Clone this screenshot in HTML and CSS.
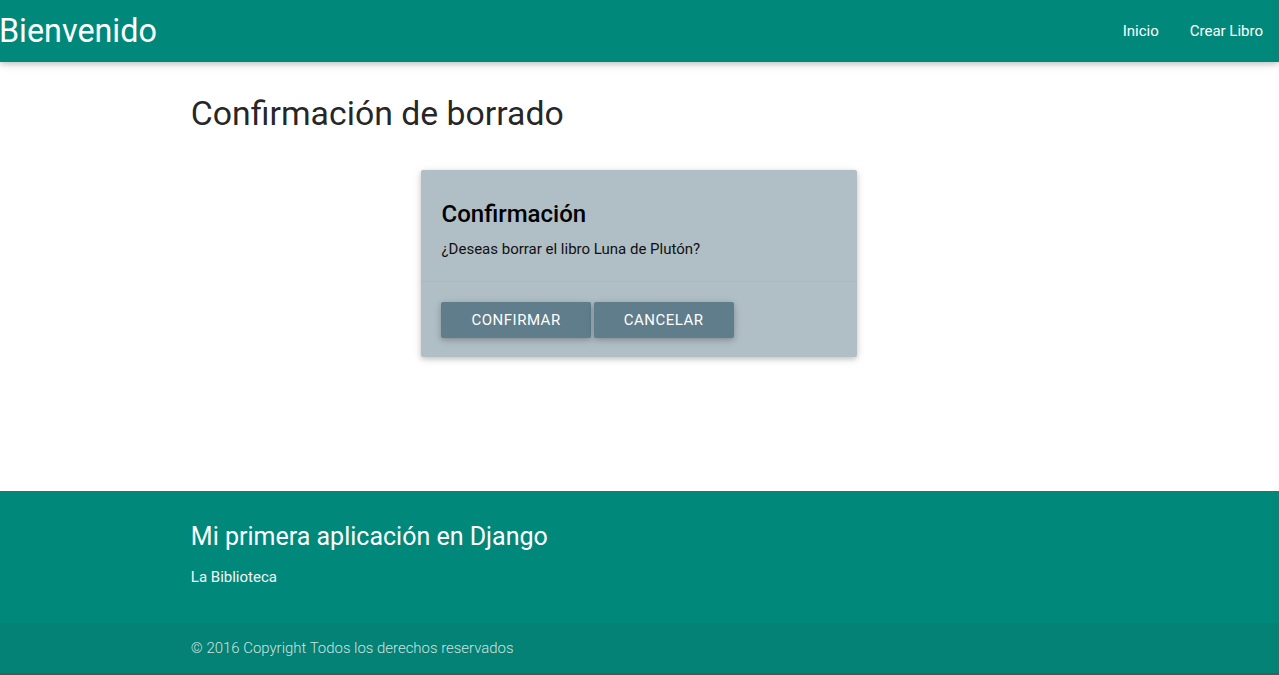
FILE: index.html
```html
<!DOCTYPE html>
<html lang="es">
<head>
<meta charset="utf-8">
<title>Bienvenido</title>
<link rel="stylesheet" href="styles.css">
</head>
<body>
<nav class="nav">
  <a class="brand" href="#">Bienvenido</a>
  <ul class="nav-links">
    <li><a href="#">Inicio</a></li>
    <li><a href="#">Crear Libro</a></li>
  </ul>
</nav>
<main class="main">
  <div class="container">
    <h3 class="page-title">Confirmación de borrado</h3>
    <div class="card">
      <div class="card-content">
        <span class="card-title">Confirmación</span>
        <p>¿Deseas borrar el libro Luna de Plutón?</p>
      </div>
      <div class="card-action">
        <button class="btn">Confirmar</button>
        <button class="btn btn-second">Cancelar</button>
      </div>
    </div>
  </div>
</main>
<footer class="footer">
  <div class="container">
    <h5 class="footer-title">Mi primera aplicación en Django</h5>
    <p class="footer-text">La Biblioteca</p>
  </div>
  <div class="footer-copyright">
    <div class="container">© 2016 Copyright Todos los derechos reservados</div>
  </div>
  <div class="bottom-strip"></div>
</footer>
</body>
</html>
```
FILE: styles.css
```css
* { box-sizing: border-box; }
html, body { margin: 0; padding: 0; }
body {
  font-family: Roboto, "Liberation Sans", sans-serif;
  font-size: 15px;
  line-height: 1.5;
  color: rgba(0,0,0,0.87);
  min-height: 100vh;
  display: flex;
  flex-direction: column;
  background: #fff;
}
a { text-decoration: none; color: inherit; }

.nav {
  height: 62px;
  background: #00897b;
  color: #fff;
  display: flex;
  align-items: center;
  justify-content: space-between;
  box-shadow: 0 2px 5px 0 rgba(0,0,0,0.16), 0 2px 10px 0 rgba(0,0,0,0.12);
  position: relative;
  z-index: 2;
}
.brand {
  font-size: 32.3px;
  line-height: 62px;
  margin-left: -1px;
}
.nav-links {
  list-style: none;
  margin: 0;
  padding: 0 1px 0 0;
  display: flex;
}
.nav-links a {
  display: block;
  padding: 0 15px;
  line-height: 60px;
  font-size: 15px;
}
.nav-links li:first-child a { padding-right: 16px; }

.main { flex: 1; }
.container {
  width: 70%;
  margin: 0 auto;
}
.page-title {
  font-size: 33.8px;
  font-weight: 400;
  line-height: 110%;
  margin: 33px 0 38px -1px;
}

.card {
  width: 436px;
  margin: 0 auto;
  background: #b0bec5;
  border-radius: 2px;
  box-shadow: 0 2px 5px 0 rgba(0,0,0,0.16), 0 2px 10px 0 rgba(0,0,0,0.12);
}
.card-content { padding: 20px; }
.card-title {
  display: block;
  font-size: 24px;
  font-weight: 500;
  line-height: 48px;
  color: #000;
}
.card-content p { margin: 0; color: #111; }
.card-action {
  border-top: 1px solid rgba(160,160,160,0.2);
  padding: 20px 20px 19px;
  display: flex;
  gap: 3px;
}
.btn {
  height: 36px;
  line-height: 36px;
  padding: 0 30px;
  border: none;
  border-radius: 2px;
  background: #607d8b;
  color: #fff;
  font-family: Roboto, "Liberation Sans", sans-serif;
  font-size: 15px;
  font-weight: 400;
  letter-spacing: .5px;
  text-transform: uppercase;
  box-shadow: 0 2px 5px 0 rgba(0,0,0,0.16), 0 2px 10px 0 rgba(0,0,0,0.12);
  cursor: pointer;
}
.btn-second { padding: 0 31px 0 30px; }

.footer {
  background: #00897b;
  color: #fff;
  padding-top: 20px;
}
.footer .container { position: relative; left: -1px; }
.footer-title {
  font-size: 25px;
  font-weight: 400;
  line-height: 110%;
  margin: 12px 0 15px;
}
.footer-text {
  margin: 0 0 35px;
  color: #f5f5f5;
}
.footer-copyright {
  height: 50px;
  line-height: 50px;
  background: rgba(51,51,51,0.08);
  color: rgba(255,255,255,0.8);
  font-weight: 300;
  font-size: 14.95px;
}
.bottom-strip {
  height: 2px;
  background: #4a5a50;
}
```
